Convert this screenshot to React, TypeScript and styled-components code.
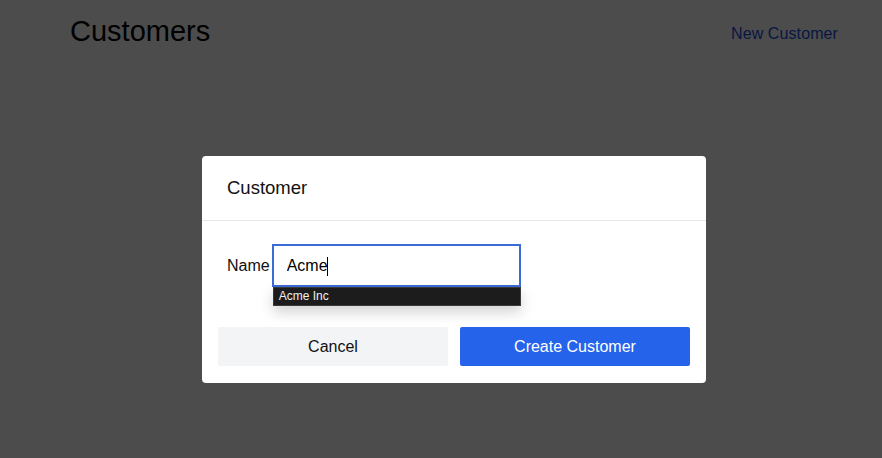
import React from "react";
import styled, { createGlobalStyle } from "styled-components";

const GlobalStyle = createGlobalStyle`
  html, body {
    margin: 0;
    padding: 0;
    background: #ffffff;
    font-family: "Liberation Sans", Arial, sans-serif;
  }
`;

const Page = styled.div`
  min-height: 458px;
  padding: 0 44px 0 70px;
`;

const Top = styled.div`
  display: flex;
  align-items: center;
  justify-content: space-between;
  height: 62px;
`;

const Title = styled.h1`
  margin: 0;
  font-size: 29px;
  font-weight: 400;
  color: #000;
`;

const NewLink = styled.a`
  font-size: 16px;
  letter-spacing: 0.1px;
  color: #1d4ed8;
  text-decoration: none;
  margin-top: 6px;
`;

const Overlay = styled.div`
  position: fixed;
  inset: 0;
  background: rgba(0, 0, 0, 0.7);
  display: flex;
  align-items: flex-start;
  padding: 156px 0 0 202px;
`;

const Modal = styled.div`
  width: 504px;
  background: #fff;
  border-radius: 4px;
`;

const Header = styled.div`
  height: 64px;
  display: flex;
  align-items: center;
  padding: 0 25px;
  border-bottom: 1px solid #e5e7eb;
  font-size: 18.5px;
  color: #111;
`;

const Body = styled.div`
  padding: 23px 16px 17px;
`;

const Field = styled.div`
  display: flex;
  align-items: center;
  gap: 2px;
  padding-left: 9px;
`;

const Label = styled.label`
  font-size: 16px;
  color: #111;
`;

const InputWrap = styled.div`
  position: relative;
`;

const Input = styled.input`
  box-sizing: border-box;
  width: 249px;
  height: 43px;
  border: 2px solid #3b6bd6;
  border-radius: 0;
  padding: 0 13px;
  font-family: inherit;
  font-size: 16px;
  color: #000;
  outline: none;
  caret-color: #000;
`;

const Caret = styled.span`
  position: absolute;
  top: 13px;
  left: 55px;
  width: 1px;
  height: 19px;
  background: #000;
`;

const Suggestions = styled.div`
  position: absolute;
  top: 43px;
  left: 1px;
  width: 248px;
  box-sizing: border-box;
  height: 19px;
  background: #1c1c1c;
  border: 1px solid #3a3a3a;
  color: #f0f0f0;
  font-size: 12px;
  line-height: 17px;
  padding-left: 5px;
  box-shadow: 0 6px 14px rgba(0, 0, 0, 0.18);
`;

const Actions = styled.div`
  display: grid;
  grid-template-columns: 1fr 1fr;
  gap: 12px;
  margin-top: 40px;
`;

const Button = styled.button<{ $primary?: boolean }>`
  height: 39px;
  padding-top: 2px;
  border: none;
  border-radius: 2px;
  font-family: inherit;
  font-size: 16px;
  cursor: pointer;
  background: ${(p) => (p.$primary ? "#2563eb" : "#f3f4f6")};
  color: ${(p) => (p.$primary ? "#fff" : "#111")};
`;

const App = () => {
  return (
    <>
      <GlobalStyle />
      <Page>
        <Top>
          <Title>Customers</Title>
          <NewLink href="#">New Customer</NewLink>
        </Top>
      </Page>
      <Overlay>
        <Modal>
          <Header>Customer</Header>
          <Body>
            <Field>
              <Label htmlFor="name">Name</Label>
              <InputWrap>
                <Input id="name" defaultValue="Acme" />
                <Caret />
                <Suggestions>Acme Inc</Suggestions>
              </InputWrap>
            </Field>
            <Actions>
              <Button>Cancel</Button>
              <Button $primary>Create Customer</Button>
            </Actions>
          </Body>
        </Modal>
      </Overlay>
    </>
  );
};

export default App;
